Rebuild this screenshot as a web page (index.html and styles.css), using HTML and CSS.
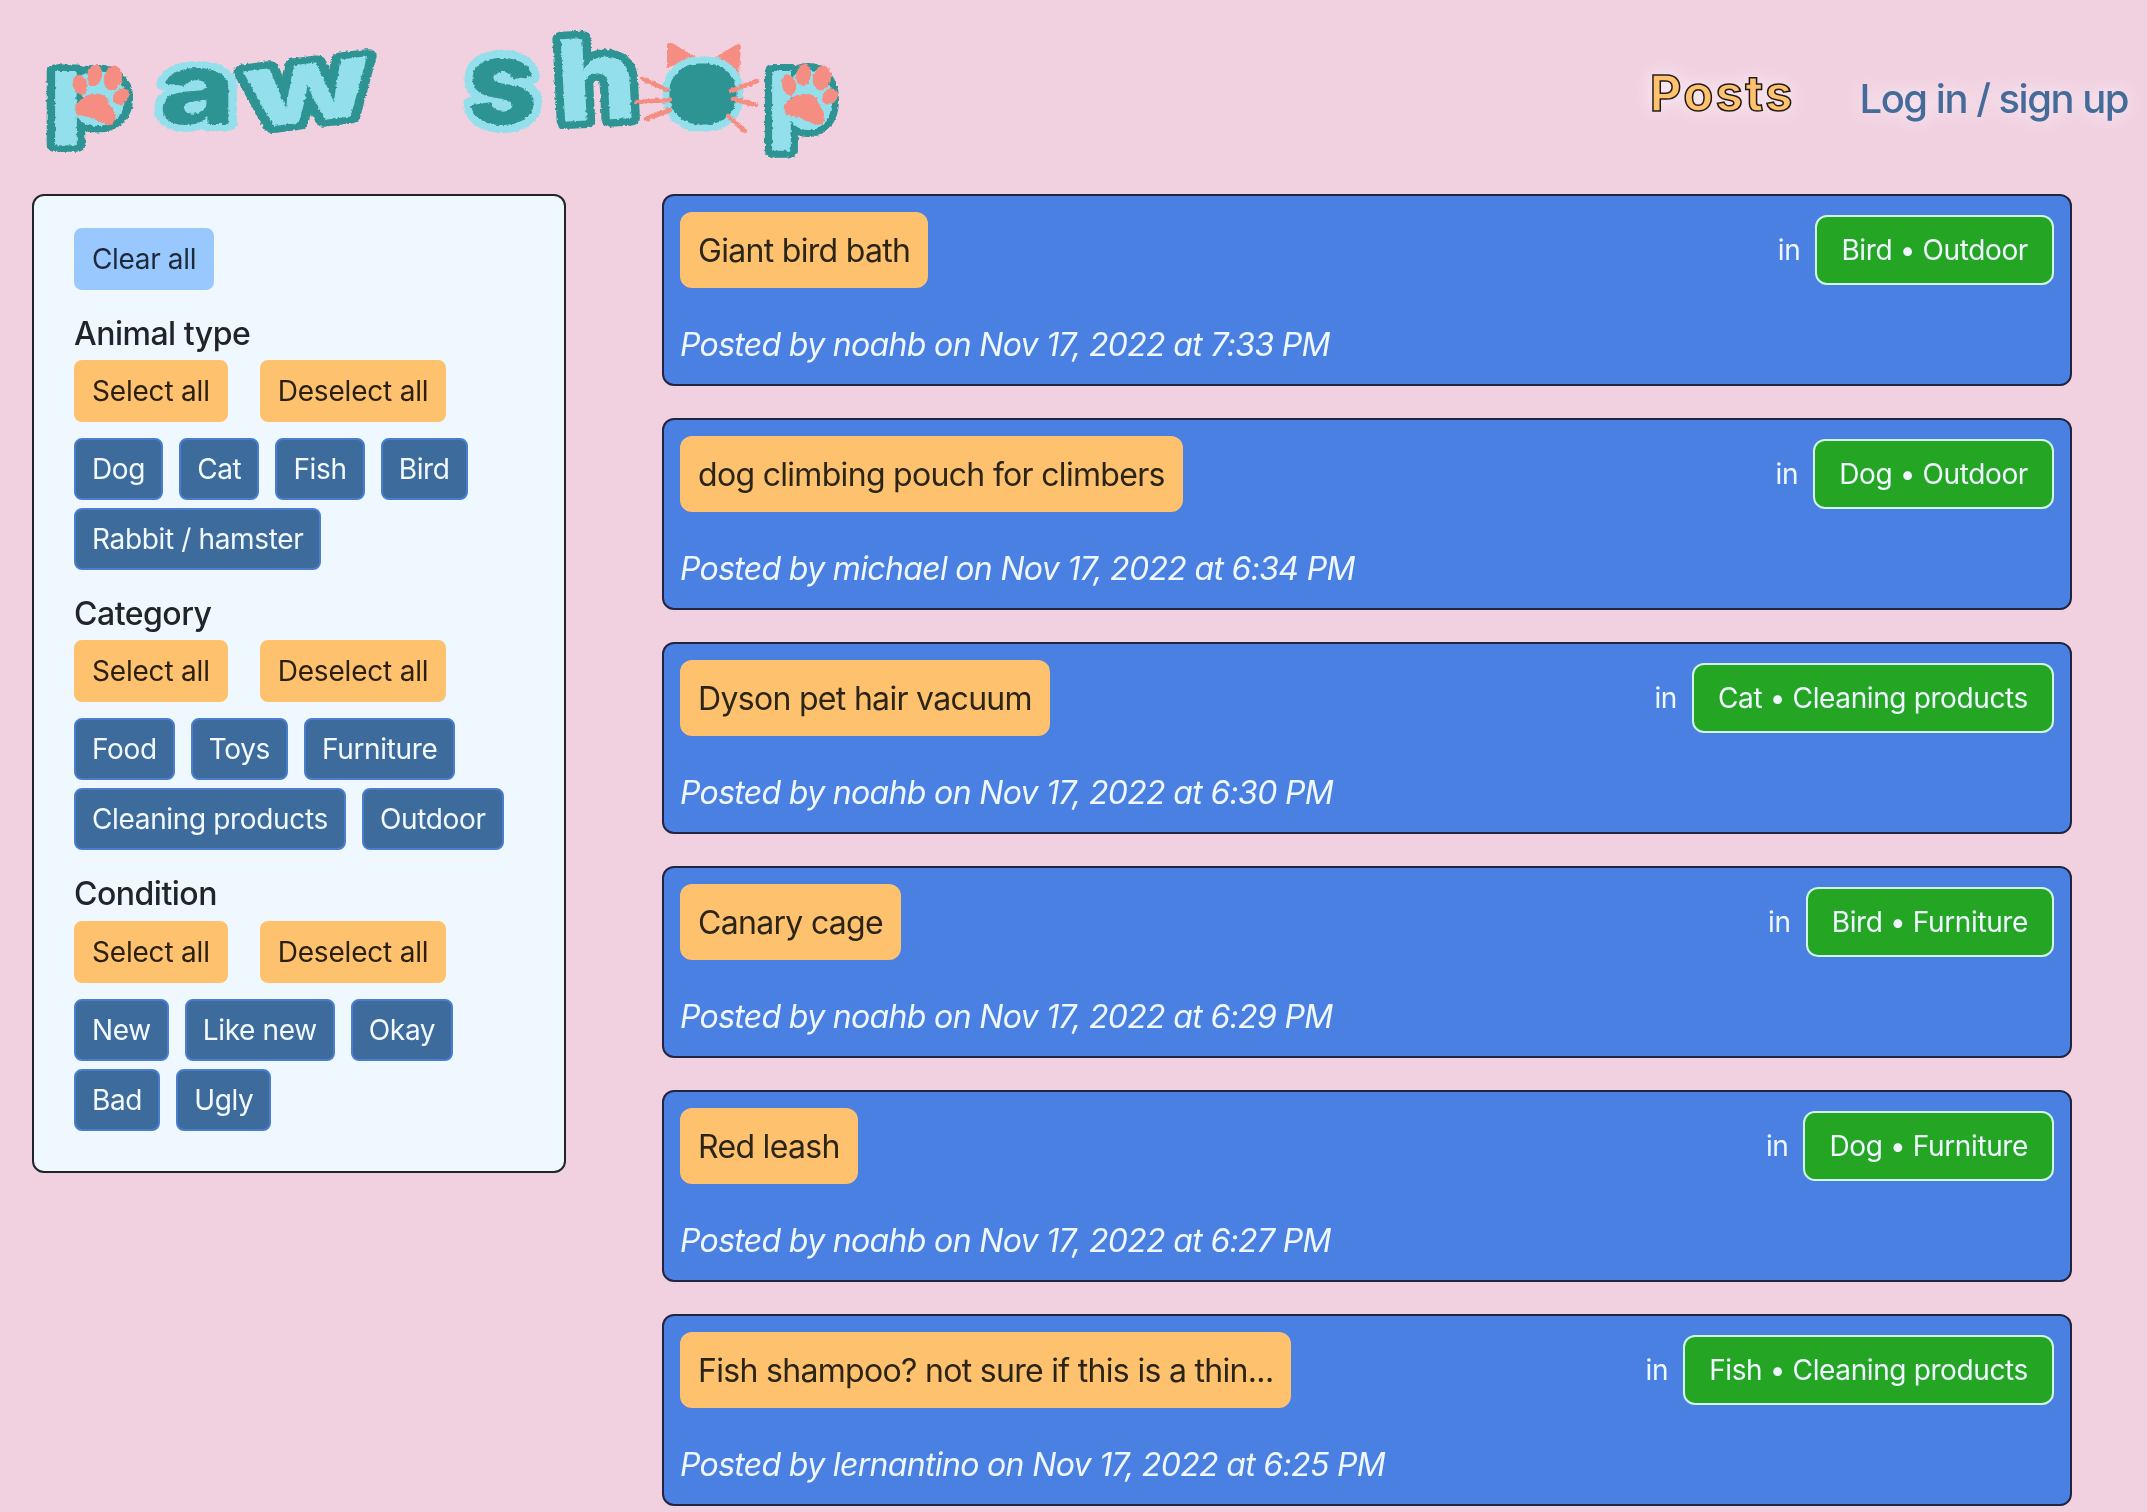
FILE: index.html
```html
<!DOCTYPE html>
<html lang="en">
<head>
<meta charset="utf-8">
<title>paw shop</title>
<link rel="stylesheet" href="styles.css">
</head>
<body>
<header class="site-header">
  <a class="brand" aria-label="paw shop">
    <svg class="logo" width="850" height="190" viewBox="0 0 850 190">
      <defs>
        <filter id="crayon" x="-5%" y="-5%" width="110%" height="110%">
          <feTurbulence type="fractalNoise" baseFrequency="0.3" numOctaves="2" seed="4" result="n"/>
          <feDisplacementMap in="SourceGraphic" in2="n" scale="3.5" xChannelSelector="R" yChannelSelector="G"/>
        </filter>
        <g id="paw">
          <ellipse class="palm" cx="102" cy="93" rx="20" ry="21"/>
          <path d="M76 105Q84 94 93 94L102 94.500Q108 97 109 103Q113 109 115 113Q117 123 110 125Q103 124 96 120Q88 116 77 115Q74 111 76 105Z"/>
          <ellipse cx="80" cy="85" rx="7" ry="10.500" transform="rotate(-12 80 85)"/>
          <ellipse cx="94.500" cy="75" rx="7.500" ry="11" transform="rotate(8 94.500 75)"/>
          <ellipse cx="113" cy="78" rx="9" ry="12.500" transform="rotate(14 113 78)"/>
          <ellipse cx="121" cy="96.500" rx="9" ry="7" transform="rotate(-45 121 96.500)"/>
        </g>
      </defs>
      <g class="lettering" filter="url(#crayon)">
        <text class="letter light" transform="translate(48 125) scale(1.2 .93)">p</text>
        <text class="letter dark" transform="translate(159 124) scale(1.23 .95)">a</text>
        <text class="letter light" transform="translate(249 129) rotate(-7) scale(1.39 1)">w</text>
        <text class="letter dark" transform="translate(467 124) scale(1.16 1.13)">s</text>
        <text class="letter light" transform="translate(558 122) rotate(-3) scale(1.2 1.07)">h</text>
        <text class="letter light" transform="translate(766 129) scale(1.03 1)">p</text>
        <path class="coral" d="M667 68l0-25 5 0 24 14ZM714 58l25-15 2 2-2 30Z"/>
        <rect class="face" x="666" y="60" width="74" height="68" rx="33" ry="31"/>
        <path class="whisker" d="M643 79l24 11M637 102l32-2M646 119l24-9M731 91l26-10M733 99l23 6M728 116l17 15"/>
        <use href="#paw" class="coral"/>
        <use href="#paw" class="coral" transform="translate(709 0)"/>
      </g>
    </svg>
  </a>
  <nav class="nav">
    <a class="nav-posts">Posts</a>
    <a class="nav-login">Log in / sign up</a>
  </nav>
</header>
<main class="page">
  <aside class="filters">
    <button class="btn clear">Clear all</button>
    <section class="group">
      <h2>Animal type</h2>
      <div class="actions"><button class="btn warm">Select all</button><button class="btn warm">Deselect all</button></div>
      <div class="chips"><button class="btn chip">Dog</button><button class="btn chip">Cat</button><button class="btn chip">Fish</button><button class="btn chip">Bird</button><button class="btn chip">Rabbit / hamster</button></div>
    </section>
    <section class="group">
      <h2>Category</h2>
      <div class="actions"><button class="btn warm">Select all</button><button class="btn warm">Deselect all</button></div>
      <div class="chips"><button class="btn chip">Food</button><button class="btn chip">Toys</button><button class="btn chip">Furniture</button><button class="btn chip">Cleaning products</button><button class="btn chip">Outdoor</button></div>
    </section>
    <section class="group">
      <h2>Condition</h2>
      <div class="actions"><button class="btn warm">Select all</button><button class="btn warm">Deselect all</button></div>
      <div class="chips"><button class="btn chip">New</button><button class="btn chip">Like new</button><button class="btn chip">Okay</button><button class="btn chip">Bad</button><button class="btn chip">Ugly</button></div>
    </section>
  </aside>
  <div class="posts">
    <article class="card">
      <div class="card-top"><a class="title">Giant bird bath</a><div class="where">in <a class="badge">Bird • Outdoor</a></div></div>
      <p class="meta">Posted by noahb on Nov 17, 2022 at 7:33 PM</p>
    </article>
    <article class="card">
      <div class="card-top"><a class="title">dog climbing pouch for climbers</a><div class="where">in <a class="badge">Dog • Outdoor</a></div></div>
      <p class="meta">Posted by michael on Nov 17, 2022 at 6:34 PM</p>
    </article>
    <article class="card">
      <div class="card-top"><a class="title">Dyson pet hair vacuum</a><div class="where">in <a class="badge">Cat • Cleaning products</a></div></div>
      <p class="meta">Posted by noahb on Nov 17, 2022 at 6:30 PM</p>
    </article>
    <article class="card">
      <div class="card-top"><a class="title">Canary cage</a><div class="where">in <a class="badge">Bird • Furniture</a></div></div>
      <p class="meta">Posted by noahb on Nov 17, 2022 at 6:29 PM</p>
    </article>
    <article class="card">
      <div class="card-top"><a class="title">Red leash</a><div class="where">in <a class="badge">Dog • Furniture</a></div></div>
      <p class="meta">Posted by noahb on Nov 17, 2022 at 6:27 PM</p>
    </article>
    <article class="card">
      <div class="card-top"><a class="title">Fish shampoo? not sure if this is a thin...</a><div class="where">in <a class="badge">Fish • Cleaning products</a></div></div>
      <p class="meta">Posted by lernantino on Nov 17, 2022 at 6:25 PM</p>
    </article>
  </div>
</main>
</body>
</html>
```
FILE: styles.css
```css
* { box-sizing: border-box; }
html { overflow: hidden; }
body {
  margin: 0;
  height: 1512px;
  overflow: hidden;
  background: #f1d0e0;
  color: #212529;
  font-family: Inter, "Liberation Sans", sans-serif;
  font-size: 32px;
  line-height: 48px;
}
.site-header {
  display: flex;
  justify-content: space-between;
  height: 194px;
  padding-right: 19px;
}
.logo { display: block; overflow: visible; }
.letter {
  font-family: Inter, sans-serif;
  font-weight: 800;
  font-size: 106px;
  line-height: 1;
  paint-order: stroke;
  stroke-width: 14px;
  stroke-linejoin: round;
}
.letter.light { fill: #93e0ec; stroke: #2e9393; }
.letter.dark { fill: #2e9393; stroke: #93e0ec; }
.palm { fill: #93e0ec; }
.coral { fill: #f58d82; }
.face { fill: #2e9393; stroke: #93e0ec; stroke-width: 7px; }
.whisker { fill: none; stroke: #f58d82; stroke-width: 4.6px; stroke-linecap: round; }
.nav {
  display: flex;
  align-items: flex-start;
  gap: 65px;
  padding-top: 70px;
}
.nav-posts {
  color: #fec16e;
  font-size: 49px;
  font-weight: 650;
  letter-spacing: 2.2px;
  -webkit-text-stroke: 1.5px #1f1a14;
  text-shadow: 0 0 20px #fff;
}
.nav-login {
  margin-top: 5px;
  color: #456b9a;
  font-size: 40px;
  font-weight: 500;
  letter-spacing: -1.5px;
  text-shadow: 0 0 20px #fff;
}
.page {
  display: flex;
  align-items: flex-start;
  gap: 96px;
  padding: 0 75px 0 32px;
}
.filters {
  width: 534px;
  height: 979px;
  padding: 32px 40px 40px;
  background: #eff8ff;
  border: 2px solid #212529;
  border-radius: 12px;
}
.btn {
  display: block;
  height: 62px;
  padding: 8px 16px;
  border: 2px solid transparent;
  border-radius: 8px;
  font: 400 28px/42px Inter, sans-serif;
  letter-spacing: -0.35px;
  white-space: nowrap;
}
.clear { background: #99c8ff; color: #1c2a3a; }
.warm {
  background: #fec16e;
  border-color: #fec16e;
  color: #2b2010;
  letter-spacing: -0.2px;
}
.chip { background: #3d6b9c; border-color: #4a7dd0; color: #f3faff; }
.group h2 {
  margin: 20px 0 2.2px;
  font-size: 32px;
  font-weight: 500;
  line-height: 48px;
  letter-spacing: -0.5px;
}
.actions { display: flex; gap: 32px; }
.chips {
  display: flex;
  flex-wrap: wrap;
  gap: 8px 16px;
  margin-top: 16px;
}
.posts {
  flex: 1;
  display: flex;
  flex-direction: column;
  gap: 32px;
}
.card {
  height: 192px;
  padding: 16px;
  background: #4a80e2;
  border: 2px solid #212540;
  border-radius: 12px;
}
.card-top {
  display: flex;
  justify-content: space-between;
  align-items: center;
  height: 76px;
}
.title {
  padding: 15px 18px 13px;
  border-radius: 12px;
  background: #fec16e;
  color: #2b2518;
  letter-spacing: -0.69px;
}
.where {
  display: flex;
  align-items: center;
  gap: 15px;
  color: #f0f8ff;
  font-size: 28px;
  line-height: 42px;
  letter-spacing: -0.38px;
}
.badge {
  padding: 12px 24px;
  border: 2px solid #d0f5e4;
  border-radius: 12px;
  background: #24a524;
}
.meta {
  margin: 33px 0 0;
  color: #f0f8ff;
  font-style: italic;
  letter-spacing: -0.67px;
}
```
